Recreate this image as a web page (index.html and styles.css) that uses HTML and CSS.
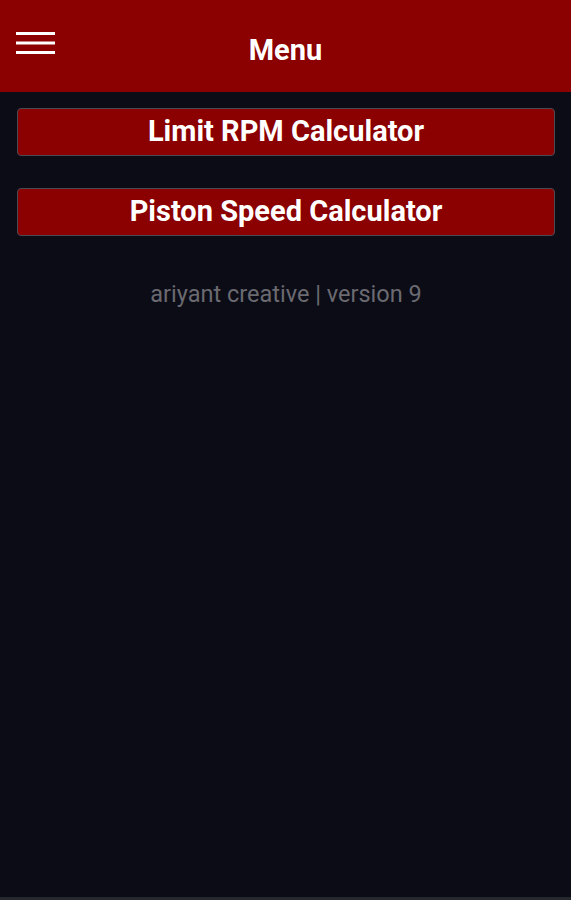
FILE: index.html
```html
<!DOCTYPE html>
<html>
<head>
<meta charset="utf-8">
<link rel="stylesheet" href="styles.css">
</head>
<body>
<div class="app">
  <header class="topbar">
    <div class="menu-btn">
      <svg width="40" height="26" viewBox="0 0 40 26">
        <rect x="0" y="1" width="39" height="3" fill="#ffffff"/>
        <rect x="0" y="10.5" width="39" height="3" fill="#ffffff"/>
        <rect x="0" y="20" width="39" height="3" fill="#ffffff"/>
      </svg>
    </div>
    <h1 class="title">Menu</h1>
    <div></div>
  </header>
  <main class="content">
    <button class="calc-btn">Limit RPM Calculator</button>
    <button class="calc-btn">Piston Speed Calculator</button>
    <p class="footer-note">ariyant creative | version 9</p>
  </main>
  <div class="bottom-bar"></div>
</div>
</body>
</html>
```

FILE: styles.css
```css
html, body {
  margin: 0;
  padding: 0;
  height: 100%;
}
body {
  background: #0c0c17;
  font-family: Roboto, "Liberation Sans", sans-serif;
}
.app {
  display: flex;
  flex-direction: column;
  height: 900px;
}
.topbar {
  height: 92px;
  background: #8b0000;
  display: grid;
  grid-template-columns: 1fr auto 1fr;
  align-items: center;
  flex-shrink: 0;
}
.menu-btn {
  padding-left: 16px;
  display: flex;
  align-items: center;
  margin-top: -4px;
}
.menu-btn svg {
  display: block;
}
.title {
  margin: 0;
  color: #ffffff;
  font-size: 29px;
  font-weight: 700;
  margin-top: 8px;
}
.content {
  flex: 1;
  padding: 16px 16px 0 17px;
  display: flex;
  flex-direction: column;
  gap: 32px;
}
.calc-btn {
  height: 48px;
  width: 100%;
  background: #8b0000;
  border: 1.5px solid #4a4a50;
  border-radius: 4px;
  color: #ffffff;
  font-family: Roboto, "Liberation Sans", sans-serif;
  font-size: 29px;
  font-weight: 700;
  padding: 0 0 2px;
  box-sizing: border-box;
  line-height: 1;
}
.footer-note {
  margin: 12px 0 0;
  text-align: center;
  color: #6a6a70;
  font-size: 23.5px;
}
.bottom-bar {
  height: 3px;
  background: #25282d;
  flex-shrink: 0;
}
```
